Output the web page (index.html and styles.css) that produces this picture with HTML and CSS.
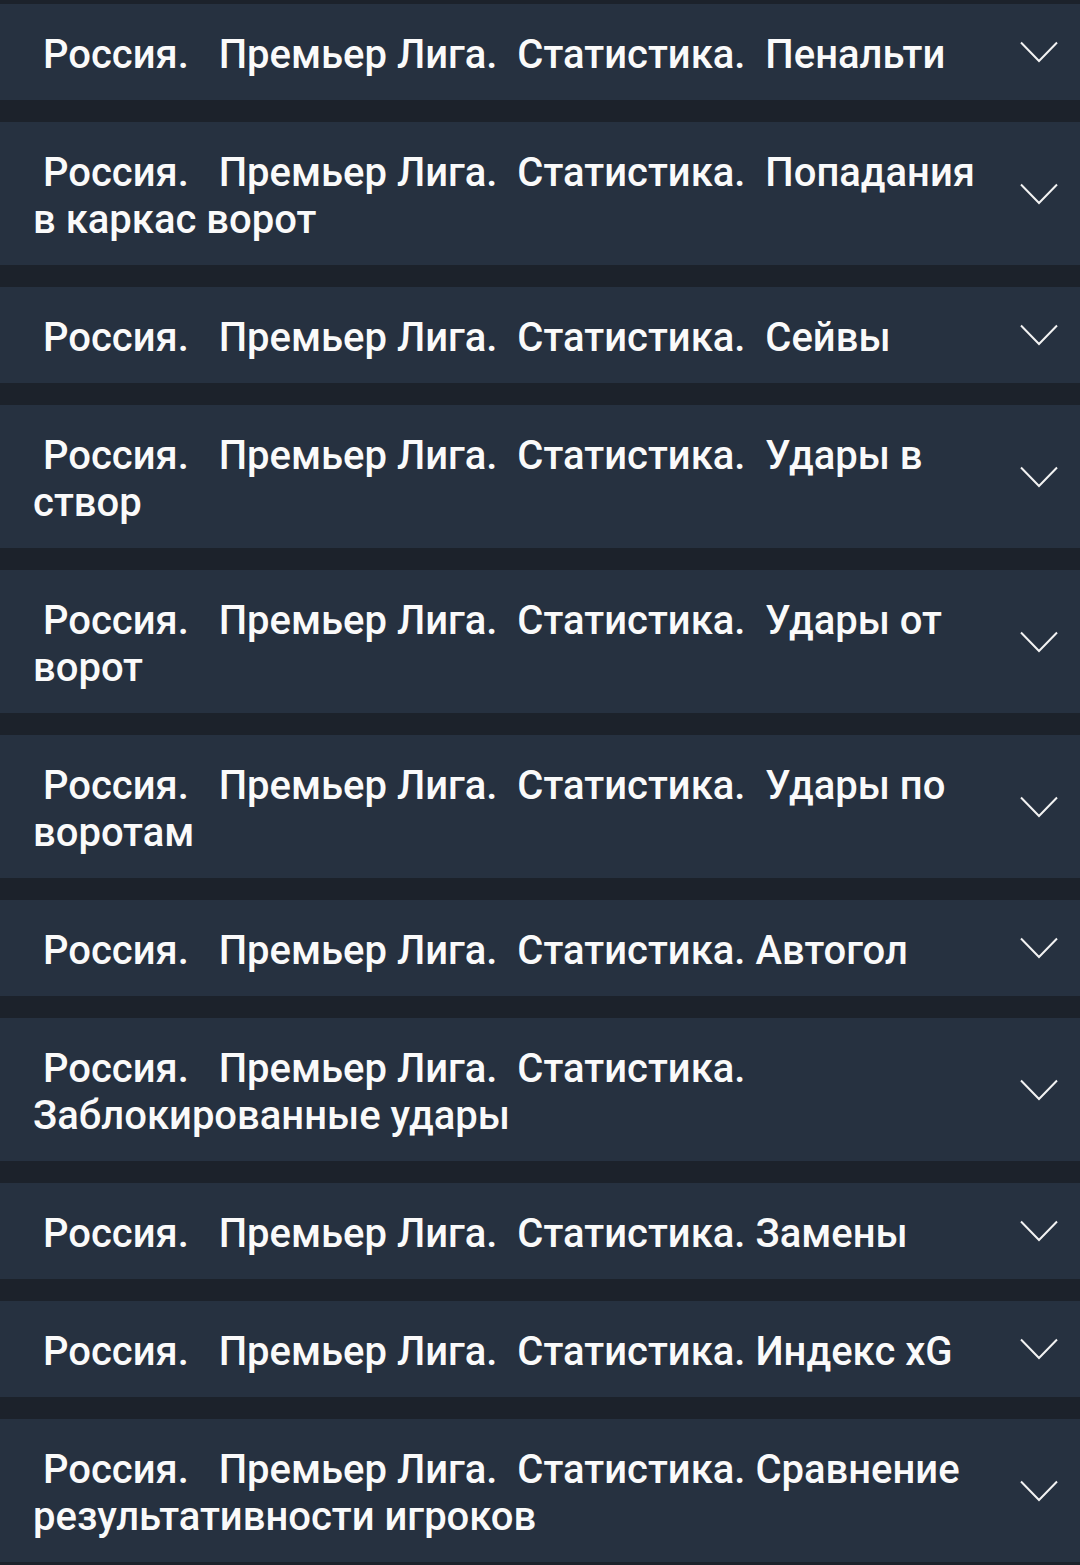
FILE: index.html
```html
<!DOCTYPE html>
<html lang="ru">
<head>
  <meta charset="UTF-8" />
  <meta name="viewport" content="width=device-width, initial-scale=1.0"/>
  <title>Статистика</title>
  <link rel="stylesheet" href="styles.css">
</head>
<body>
  <div class="list" id="statList">
    <!-- Items rendered below -->
  </div>

  <script>
    const titles = [
      " Россия.   Премьер Лига.  Статистика.  Пенальти",
      " Россия.   Премьер Лига.  Статистика.  Попадания в каркас ворот",
      " Россия.   Премьер Лига.  Статистика.  Сейвы",
      " Россия.   Премьер Лига.  Статистика.  Удары в створ",
      " Россия.   Премьер Лига.  Статистика.  Удары от ворот",
      " Россия.   Премьер Лига.  Статистика.  Удары по воротам",
      " Россия.   Премьер Лига.  Статистика. Автогол",
      " Россия.   Премьер Лига.  Статистика. Заблокированные удары",
      " Россия.   Премьер Лига.  Статистика. Замены",
      " Россия.   Премьер Лига.  Статистика. Индекс xG",
      " Россия.   Премьер Лига.  Статистика. Сравнение результативности игроков"
    ];

    const list = document.getElementById("statList");

    titles.forEach(title => {
      const item = document.createElement("div");
      item.className = "item";
      item.innerHTML = `
        <span class="item-title"></span>
        <svg class="chevron" viewBox="0 0 38 22" fill="none" stroke="currentColor" stroke-width="2">
          <path d="M1 1.5 L19 20 L37 1.5" />
        </svg>
      `;
      item.querySelector(".item-title").textContent = title;
      list.appendChild(item);
    });
  </script>
</body>
</html>
```

FILE: styles.css
```css
body {
  margin: 0;
  padding: 0;
  background: #1c222b;
  font-family: Roboto, "Noto Sans", sans-serif;
}
.list {
  display: flex;
  flex-direction: column;
  gap: 22px;
  padding-top: 4px;
}
.item {
  display: flex;
  align-items: center;
  background: #263140;
  padding: 0 22px 0 33px;
  color: #fafafa;
}
.item-title {
  flex: 1;
  font-size: 40px;
  font-weight: 500;
  line-height: 47px;
  white-space: pre-wrap;
  padding: 27px 20px 22px 0;
}
.chevron {
  width: 38px;
  height: 22px;
  flex-shrink: 0;
  color: #f2f2f2;
}
```
